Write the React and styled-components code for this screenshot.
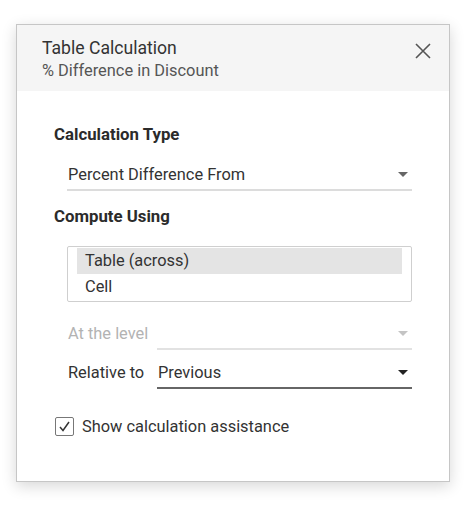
import React from "react";
import styled, { createGlobalStyle } from "styled-components";

const Global = createGlobalStyle`
  html, body { margin: 0; padding: 0; background: #ffffff; }
  body { font-family: Roboto, "Liberation Sans", sans-serif; color: #333; }
`;

const Page = styled.div`
  padding: 24px 0 0 16px;
  height: 507px;
  box-sizing: border-box;
`;

const Dialog = styled.div`
  width: 434px;
  height: 458px;
  box-sizing: border-box;
  border: 1px solid #c6c6c6;
  background: #fff;
  box-shadow: 0 4px 14px rgba(0, 0, 0, 0.16);
  display: flex;
  flex-direction: column;
`;

const Header = styled.div`
  background: #f5f5f5;
  height: 66px;
  box-sizing: border-box;
  padding: 12px 18px 0 25px;
  display: flex;
  justify-content: space-between;
  align-items: flex-start;
`;

const Titles = styled.div`
  display: flex;
  flex-direction: column;
`;

const Title = styled.div`
  font-size: 17.6px;
  line-height: 23px;
  color: #333;
`;

const Subtitle = styled.div`
  font-size: 16.4px;
  line-height: 22px;
  color: #555;
`;

const Close = styled.button`
  border: none;
  background: none;
  padding: 0;
  margin-top: 6px;
  width: 16px;
  height: 16px;
  display: flex;
  cursor: pointer;
`;

const Body = styled.div`
  padding: 32px 37px 0 37px;
  display: flex;
  flex-direction: column;
`;

const SectionTitle = styled.div`
  font-size: 16.8px;
  font-weight: 700;
  line-height: 22px;
  color: #2b2b2b;
  margin-top: ${(p) => p.$mt || 0}px;
`;

const Select = styled.div`
  flex: 1;
  display: flex;
  align-items: center;
  justify-content: space-between;
  height: 32px;
  box-sizing: border-box;
  border-bottom: 2px solid ${(p) => p.$line};
  padding: 0 4px 0 1px;
  font-size: 16.4px;
  color: ${(p) => p.$color};
`;

const Arrow = styled.span`
  width: 0;
  height: 0;
  border-left: 5px solid transparent;
  border-right: 5px solid transparent;
  border-top: 5px solid ${(p) => p.$color};
`;

const TypeRow = styled.div`
  display: flex;
  margin: 14px 0 0 13px;
`;

const ListBox = styled.div`
  margin: 19px 0 0 13px;
  height: 56px;
  box-sizing: border-box;
  border: 1px solid #cfcfcf;
  border-radius: 2px;
  padding: 1px 9px 0 9px;
  display: flex;
  flex-direction: column;
`;

const ListItem = styled.div`
  height: 26px;
  line-height: 26px;
  padding-left: 8px;
  font-size: 16.4px;
  color: #333;
  background: ${(p) => (p.$selected ? "#e4e4e4" : "transparent")};
`;

const LevelRow = styled.div`
  display: flex;
  align-items: flex-end;
  margin: ${(p) => p.$mt}px 0 0 14px;
  gap: 8px;
`;

const RowLabel = styled.div`
  font-size: 16.4px;
  color: ${(p) => p.$color};
  width: 81px;
  line-height: 32px;
  white-space: nowrap;
`;

const CheckRow = styled.label`
  display: flex;
  align-items: center;
  gap: 8px;
  margin: 28px 0 0 1px;
  font-size: 16.4px;
  color: #333;
`;

const Box = styled.span`
  width: 19px;
  height: 19px;
  box-sizing: border-box;
  border: 1px solid #777;
  border-radius: 2px;
  display: flex;
  align-items: center;
  justify-content: center;
`;

export default function App() {
  return (
    <>
      <Global />
      <Page>
        <Dialog>
          <Header>
            <Titles>
              <Title>Table Calculation</Title>
              <Subtitle>% Difference in Discount</Subtitle>
            </Titles>
            <Close aria-label="Close">
              <svg width="16" height="16" viewBox="0 0 16 16">
                <path d="M1 1 L15 15 M15 1 L1 15" stroke="#555" strokeWidth="1.6" />
              </svg>
            </Close>
          </Header>
          <Body>
            <SectionTitle>Calculation Type</SectionTitle>
            <TypeRow>
              <Select $line="#dcdcdc" $color="#333">
                Percent Difference From
                <Arrow $color="#666" />
              </Select>
            </TypeRow>
            <SectionTitle $mt={14}>Compute Using</SectionTitle>
            <ListBox>
              <ListItem $selected>Table (across)</ListItem>
              <ListItem>Cell</ListItem>
            </ListBox>
            <LevelRow $mt={16}>
              <RowLabel $color="#b3b3b3">At the level</RowLabel>
              <Select $line="#e2e2e2" $color="#b3b3b3">
                <span />
                <Arrow $color="#c4c4c4" />
              </Select>
            </LevelRow>
            <LevelRow $mt={7}>
              <RowLabel $color="#333">Relative to</RowLabel>
              <Select $line="#666" $color="#333">
                Previous
                <Arrow $color="#222" />
              </Select>
            </LevelRow>
            <CheckRow>
              <Box>
                <svg width="13" height="13" viewBox="0 0 13 13">
                  <path d="M2 7 L5 10.5 L11 2" stroke="#333" strokeWidth="1.5" fill="none" />
                </svg>
              </Box>
              Show calculation assistance
            </CheckRow>
          </Body>
        </Dialog>
      </Page>
    </>
  );
}
